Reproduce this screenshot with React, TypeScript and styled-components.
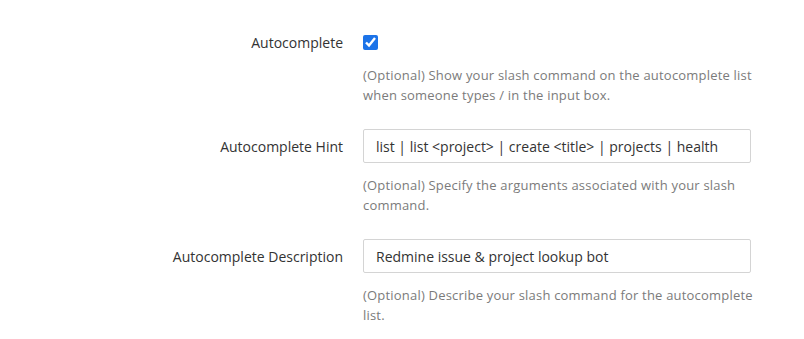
import { FC } from 'react';
import styled, { createGlobalStyle } from 'styled-components';

const GlobalStyle = createGlobalStyle`
  body {
    margin: 0;
    background: #ffffff;
    font-family: 'Open Sans', 'Noto Sans', sans-serif;
    color: #333333;
  }
`;

const Page = styled.div`
  display: flex;
  flex-direction: column;
  gap: 24px;
  padding-top: 31px;
`;

const Setting = styled.div`
  display: grid;
  grid-template-columns: 343px 400px;
  column-gap: 20px;
`;

const Label = styled.label`
  grid-column: 1;
  align-self: center;
  text-align: right;
  font-size: 14px;
  color: #333333;
`;

const Control = styled.div<{ $height: number }>`
  grid-column: 2;
  display: flex;
  align-items: center;
  width: 388px;
  height: ${(p) => p.$height}px;
`;

const Checkbox = styled.input`
  width: 15px;
  height: 15px;
  margin: 0;
  accent-color: #1c73e8;
`;

const TextInput = styled.input`
  box-sizing: border-box;
  width: 100%;
  height: 34px;
  padding: 0 12px;
  border: 1px solid #d4d4d4;
  border-radius: 2px;
  font-family: inherit;
  font-size: 14px;
  color: #333333;
  outline: none;
`;

const Help = styled.div`
  grid-column: 2;
  margin-top: 12px;
  font-size: 13px;
  letter-spacing: 0.2px;
  line-height: 20px;
  color: #7b7b7b;
`;

const App: FC = () => {
  return (
    <>
      <GlobalStyle />
      <Page>
        <Setting>
          <Label>Autocomplete</Label>
          <Control $height={22}>
            <Checkbox type="checkbox" defaultChecked />
          </Control>
          <Help>
            (Optional) Show your slash command on the autocomplete list when someone types / in the
            input box.
          </Help>
        </Setting>
        <Setting>
          <Label>Autocomplete Hint</Label>
          <Control $height={34}>
            <TextInput defaultValue="list | list <project> | create <title> | projects | health" />
          </Control>
          <Help>(Optional) Specify the arguments associated with your slash command.</Help>
        </Setting>
        <Setting>
          <Label>Autocomplete Description</Label>
          <Control $height={34}>
            <TextInput defaultValue="Redmine issue & project lookup bot" />
          </Control>
          <Help>(Optional) Describe your slash command for the autocomplete list.</Help>
        </Setting>
      </Page>
    </>
  );
};

export default App;
